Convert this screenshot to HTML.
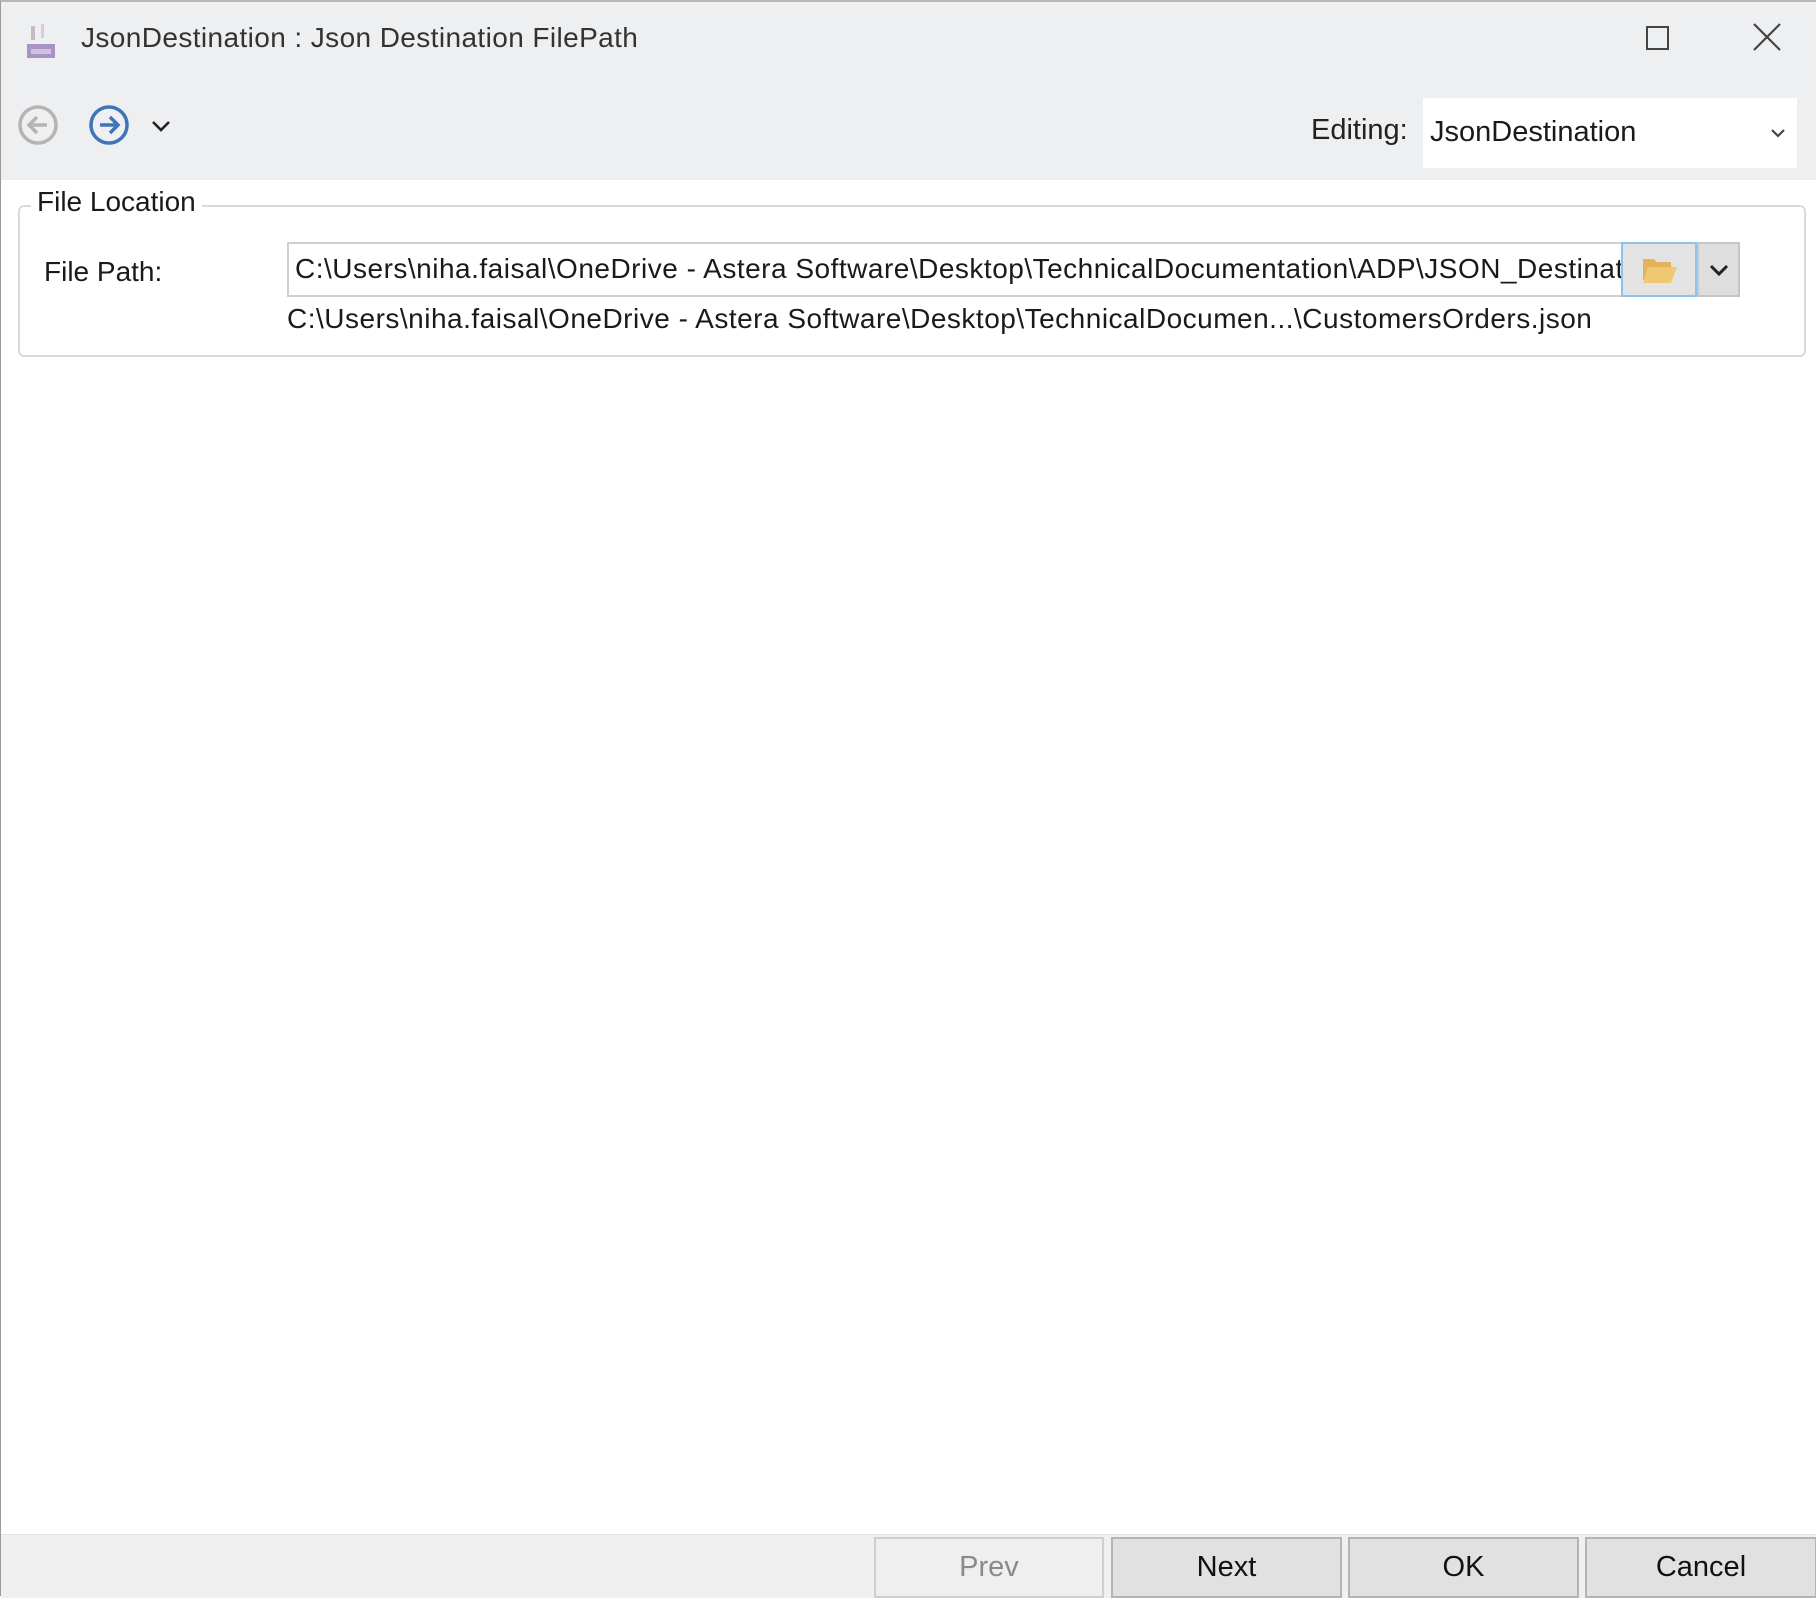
<!DOCTYPE html>
<html><head><meta charset="utf-8"><style>
*{margin:0;padding:0;box-sizing:border-box}
body{width:1816px;height:1596px;background:#fff;font-family:"Liberation Sans",sans-serif;color:#1a1a1a;position:relative;overflow:hidden;border-left:1px solid #9a9a9a;border-top:2px solid #b8b8b8}
.abs{position:absolute}
.top{left:0;top:0;width:1816px;height:178px;background:#eeeff1}
.t{white-space:nowrap;line-height:1}
.btn{position:absolute;top:1535px;height:61px;background:#e1e1e1;border:2px solid #b4b4b4;font-size:29px;display:flex;align-items:center;justify-content:center;color:#111}
</style></head><body>
<div class="abs top"></div>
<svg class="abs" style="left:24px;top:20px" width="34" height="38" viewBox="0 0 34 38">
<rect x="6" y="4" width="4" height="14" fill="#c9b6c9"/><rect x="16" y="2" width="3" height="14" fill="#d6cbd6"/>
<rect x="2" y="22" width="28" height="14" fill="#a993c6"/><rect x="6" y="27" width="20" height="5" fill="#cfc2e0"/></svg>
<div class="abs t" style="left:80px;top:22px;font-size:28px;color:#333;letter-spacing:0.4px">JsonDestination : Json Destination FilePath</div>
<div class="abs" style="left:1645px;top:24px;width:23px;height:24px;border:2px solid #444"></div>
<svg class="abs" style="left:1751px;top:20px" width="30" height="30"><path d="M2 2L28 28M28 2L2 28" stroke="#444" stroke-width="2.2"/></svg>
<svg class="abs" style="left:16px;top:102px" width="44" height="44"><circle cx="21" cy="21" r="18" fill="none" stroke="#b4b4b4" stroke-width="3.5"/><path d="M30 21H13M20 13l-8 8 8 8" fill="none" stroke="#b4b4b4" stroke-width="3.5"/></svg>
<svg class="abs" style="left:87px;top:102px" width="44" height="44"><circle cx="21" cy="21" r="18" fill="none" stroke="#3f74b8" stroke-width="3.5"/><path d="M12 21H29M22 13l8 8-8 8" fill="none" stroke="#3f74b8" stroke-width="3.5"/></svg>
<svg class="abs" style="left:150px;top:117px" width="20" height="14"><path d="M2 3l8 8 8-8" fill="none" stroke="#222" stroke-width="2.6"/></svg>
<div class="abs t" style="left:1310px;top:114px;font-size:29px;color:#222">Editing:</div>
<div class="abs" style="left:1422px;top:96px;width:374px;height:70px;background:#fff"></div>
<div class="abs t" style="left:1429px;top:116px;font-size:29px;color:#1a1a1a">JsonDestination</div>
<svg class="abs" style="left:1769px;top:126px" width="16" height="12"><path d="M2 2l6 6 6-6" fill="none" stroke="#444" stroke-width="2.2"/></svg>
<div class="abs" style="left:17px;top:203px;width:1788px;height:152px;border:2px solid #dadada;border-radius:6px"></div>
<div class="abs t" style="left:30px;top:186px;font-size:28px;background:#fff;padding:0 6px">File Location</div>
<div class="abs t" style="left:43px;top:256px;font-size:28px">File Path:</div>
<div class="abs" style="left:286px;top:240px;width:1334px;height:55px;border:2px solid #d0d0d0;border-right:none;overflow:hidden;background:#fff">
<div class="t" style="position:absolute;left:6px;top:11px;font-size:28px;letter-spacing:0.5px">C:\Users\niha.faisal\OneDrive - Astera Software\Desktop\TechnicalDocumentation\ADP\JSON_Destination</div></div>
<div class="abs" style="left:1620px;top:240px;width:76px;height:55px;background:#e3e3e3;border:2px solid #8cc3ee"></div>
<svg class="abs" style="left:1640px;top:253px" width="38" height="30"><path d="M2 4h11l3 3h14v18H2z" fill="#e3b35a"/><path d="M7 12h29l-6 16H2z" fill="#f0c872"/></svg>
<div class="abs" style="left:1696px;top:240px;width:43px;height:55px;background:#dedede;border:2px solid #c6c6c6"></div>
<svg class="abs" style="left:1707px;top:261px" width="22" height="14"><path d="M3 3l8 8 8-8" fill="none" stroke="#222" stroke-width="3"/></svg>
<div class="abs t" style="left:286px;top:303px;font-size:28px;letter-spacing:0.5px">C:\Users\niha.faisal\OneDrive - Astera Software\Desktop\TechnicalDocumen...\CustomersOrders.json</div>
<div class="abs" style="left:0;top:1532px;width:1816px;height:64px;background:#f0f0f0;border-top:1px solid #e4e4e4"></div>
<div class="btn" style="left:873px;width:230px;background:#efefef;border-color:#cfcfcf;color:#8a8a8a">Prev</div>
<div class="btn" style="left:1110px;width:231px">Next</div>
<div class="btn" style="left:1347px;width:231px">OK</div>
<div class="btn" style="left:1584px;width:232px">Cancel</div>
</body></html>
